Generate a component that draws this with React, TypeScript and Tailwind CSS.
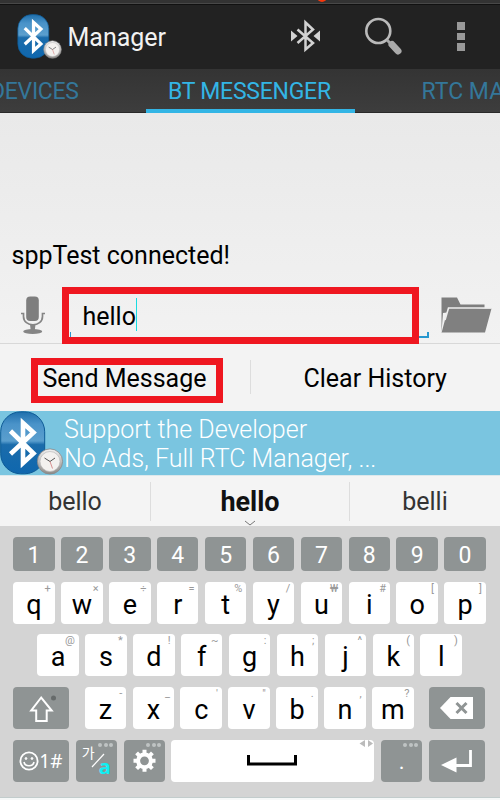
import React from 'react';

function BluetoothClock({ className }: { className: string }) {
  return (
    <svg viewBox="0 0 64 64" className={className}>
      <defs>
        <linearGradient id="pill" x1="0" y1="0" x2="0" y2="1">
          <stop offset="0" stopColor="#1f6fac" />
          <stop offset="0.2" stopColor="#4a93c9" />
          <stop offset="0.47" stopColor="#5b9fce" />
          <stop offset="0.53" stopColor="#1b6cab" />
          <stop offset="1" stopColor="#0f67ae" />
        </linearGradient>
        <linearGradient id="rim" x1="0" y1="0" x2="0" y2="1">
          <stop offset="0" stopColor="#f2f2f2" />
          <stop offset="1" stopColor="#8d8a88" />
        </linearGradient>
      </defs>
      <rect x="1.2" y="0.8" width="44" height="62" rx="20" fill="url(#pill)" stroke="#0d5a96" strokeWidth="1" />
      <path d="M11 20 34 42.500 23.500 52V12L34 21.500 11 43" fill="none" stroke="#fff" strokeWidth="4.600" />
      <circle cx="50.500" cy="50.500" r="12.600" fill="url(#rim)" stroke="#888" strokeWidth="0.8" />
      <circle cx="50.500" cy="50.500" r="10" fill="#f3f1ef" stroke="#bbb" strokeWidth="0.7" />
      <path d="M45 47l5.500 3.500 5-3.500" fill="none" stroke="#555" strokeWidth="1" />
      <path d="M50.500 50.500l2.500 7" stroke="#c66" strokeWidth="0.7" />
    </svg>
  );
}

function Header() {
  return (
    <>
      <div className="flex h-[3px] justify-center overflow-hidden bg-[#333] pl-[144px]">
        <div className="-mt-[8px] size-[10px] rounded-full bg-[#f8370c]" />
      </div>
      <header className="flex h-[66px] items-start border-t border-[#484848] bg-[#222] shadow-[inset_0_1px_0_#111]">
        <BluetoothClock className="ml-[17px] mt-[10px] h-[45px] w-[45px]" />
        <h1 className="ml-[5.5px] mt-[18px] w-[220.5px] text-[25px] leading-[32px] text-[#f2f2f2]">Manager</h1>
        <svg className="mt-[14px] h-[36px] w-[34px]" viewBox="288 18 34 36" fill="none">
          <path d="M297.500 29.500 313 43l-7.500 6.500v-27l7.500 7L297.500 43" stroke="#d2d2d2" strokeWidth="2.500" />
          <path d="M291 30.500v11l6.500-5.500zM320 30.500v11l-6.500-5.500z" fill="#d2d2d2" />
        </svg>
        <svg className="ml-[40px] mt-[11px] h-[42px] w-[42px]" viewBox="362 15 42 42" fill="none">
          <circle cx="378.300" cy="31" r="12" stroke="#bababa" strokeWidth="2.600" />
          <path d="m387 40 4 4" stroke="#aaa" strokeWidth="3" />
          <path d="m392 44.500 6 6.500" stroke="#aaa" strokeWidth="7" strokeLinecap="round" />
        </svg>
        <div className="ml-[53px] mt-[18px] flex flex-col gap-[3px]">
          <i className="size-[7.5px] bg-[#999]" />
          <i className="size-[7.5px] bg-[#999]" />
          <i className="size-[7.5px] bg-[#999]" />
        </div>
      </header>
      <nav className="flex h-[44px] overflow-hidden whitespace-nowrap bg-linear-to-b from-[#343434] to-[#3d3d3d] text-[23px] leading-[45px] text-[#34779a] shadow-[inset_0_-1px_0_#292929]">
        <div className="w-[146px] shrink-0"><span className="-ml-[10px] tracking-[-0.3px]">DEVICES</span></div>
        <div className="h-[44px] w-[209px] shrink-0 border-b-4 border-[#33b5e5] pl-[22px] tracking-[-0.25px] text-[#33b5e5]">BT MESSENGER</div>
        <div className="ml-[66.5px]">RTC MANAGER</div>
      </nav>
    </>
  );
}

function Messenger() {
  return (
    <section className="flex h-[231px] flex-col border-b border-[#d8d8d8] bg-linear-to-b from-[#e9e9e9] to-[#f2f2f2]">
      <p className="ml-[11.5px] mt-[127px] h-[32px] text-[25px] leading-[32px]">sppTest connected!</p>
      <div className="mt-[15px] flex items-start">
        <svg className="ml-[20px] mt-[8px] h-[40px] w-[26px]" viewBox="20 295 26 40" fill="none" stroke="#858585">
          <rect x="26.200" y="296.500" width="12.600" height="24.500" rx="4" fill="#7e7e7e" stroke="none" />
          <path d="M21 313.500h2.500v3c0 11 19 11 19 0v-3H45" strokeWidth="1.700" />
          <path d="M30 324.500h5.500l-.7 5.500h-4.100z" fill="#858585" stroke="none" />
          <ellipse cx="32.700" cy="331.500" rx="9.500" ry="2.400" fill="#858585" stroke="none" />
        </svg>
        <div className="ml-[16px] flex h-[57px] w-[357px] items-start border-[7px] border-[#ef1720]">
          <i className="ml-px mt-[38px] h-[5px] w-px bg-[#2994cf]" />
          <span className="ml-[11.5px] mt-[7px] text-[25px] leading-[32px]">hello</span>
          <i className="mt-[4px] h-[33px] w-px bg-[#18dce1]" />
        </div>
        <i className="mt-[45px] h-[6px] w-[10px] border-b-2 border-r-2 border-[#2998cf]" />
        <svg className="ml-[12px] mt-[10px] h-[38px] w-[52px]" viewBox="441 297 52 38">
          <path d="M441.500 332.500v-35H457l3.500 7h24v3.500l-41.500 5z" fill="#7e7e7e" />
          <path d="M441.500 333 448 308.500h43.500l-6.500 24h-43z" fill="#808080" />
          <path d="m445 320 3.500-12h43" fill="none" stroke="#eee" strokeWidth="1.600" />
        </svg>
      </div>
    </section>
  );
}

function Actions() {
  return (
    <>
      <div className="flex h-[67px] items-start bg-[#f3f3f3] text-[25px] leading-[32px]">
        <div className="ml-[31px] mt-[14px] h-[45px] w-[192px] whitespace-nowrap border-[7px] border-[#ef1720] pl-[4.5px] leading-[28px]">Send Message</div>
        <i className="ml-[27px] mt-[16px] h-[34px] w-px bg-[#ddd]" />
        <div className="ml-[52.5px] mt-[19px] whitespace-nowrap">Clear History</div>
      </div>
      <aside className="flex h-[64px] items-start bg-[#7ac5e0] text-[25px] font-light text-white">
        <BluetoothClock className="-ml-px mt-0 h-[64px] w-[65px]" />
        <div className="pt-[4px] leading-[29px]">
          <p>Support the Developer</p>
          <p>No Ads, Full RTC Manager, ...</p>
        </div>
      </aside>
      <div className="flex h-[51px] items-center border-t border-[#dce8ec] bg-[#f4f4f4] text-center text-[25px] text-[#333]">
        <span className="w-[150px] pt-[2px]">bello</span>
        <span className="flex h-[39px] w-[200px] flex-col items-center border-x border-[#ddd] text-[27px] font-bold text-[#111]">
          <span className="h-[38px] leading-[40px]">hello</span>
          <svg className="h-[6px] w-[12px] shrink-0" viewBox="0 0 12 6"><path d="m1 1 5 4 5-4" fill="none" stroke="#777" /></svg>
        </span>
        <span className="w-[150px] pt-[2px]">belli</span>
      </div>
    </>
  );
}

function Key({ label, hint }: { label: string; hint: string }) {
  return (
    <div className="relative h-[42px] w-[41.5px] rounded-[4px] bg-white text-center text-[27px] leading-[47px] text-black">
      {label}
      <span className="absolute right-[4px] top-0 text-[11px] leading-[13px] text-[#999]">{hint}</span>
    </div>
  );
}

function Dots() {
  return (
    <span className="absolute right-[4px] top-[3px] flex gap-[1.5px]">
      <i className="size-[4px] rounded-full bg-[#bfc3c3]" />
      <i className="size-[4px] rounded-full bg-[#bfc3c3]" />
      <i className="size-[4px] rounded-full bg-[#bfc3c3]" />
    </span>
  );
}

const top = [['q', '+'], ['w', '×'], ['e', '÷'], ['r', '='], ['t', '%'], ['y', '/'], ['u', '₩'], ['i', '#'], ['o', '['], ['p', ']']];
const middle = [['a', '@'], ['s', '*'], ['d', '!'], ['f', '~'], ['g', ':'], ['h', ';'], ['j', '^'], ['k', '('], ['l', ')']];
const bottom = [['z', '-'], ['x', '_'], ['c', "'"], ['v', '"'], ['b', '.'], ['n', ','], ['m', '?']];

function Keyboard() {
  return (
    <section className="flex h-[271px] flex-col bg-[#d4d4d4] pl-[13.3px] pt-[11px] font-[Roboto,'Noto_Sans_CJK_KR',sans-serif]">
      <div className="flex gap-[6.4px]">
        {'1234567890'.split('').map((n) => (
          <div key={n} className="h-[34px] w-[41.5px] rounded-[4px] bg-[#8f9494] text-center text-[23px] leading-[38px] text-white">{n}</div>
        ))}
      </div>
      <div className="mt-[11px] flex gap-[6.4px]">{top.map(([a, b]) => <Key key={a} label={a} hint={b} />)}</div>
      <div className="ml-[24px] mt-[10px] flex gap-[6.4px]">{middle.map(([a, b]) => <Key key={a} label={a} hint={b} />)}</div>
      <div className="mt-[11px] flex gap-[6.4px]">
        <div className="mr-[9px] h-[42px] w-[56px] rounded-[4px] bg-[#8f9494]">
          <svg viewBox="13 687 56 42" fill="none"><path d="m41.200 697.500-10 13h5v10.500h10.500v-10.500h5z" stroke="#fff" strokeWidth="2" /><circle cx="53.500" cy="698" r="2.500" fill="#666b6b" /></svg>
        </div>
        {bottom.map(([a, b]) => <Key key={a} label={a} hint={b} />)}
        <div className="ml-[9px] h-[42px] w-[56px] rounded-[4px] bg-[#8f9494]">
          <svg viewBox="430 687 56 42"><path d="m441 708 10.500-11H474v22h-22.500z" fill="#fff" /><path d="m457.500 703 10 10m0-10-10 10" stroke="#8f9494" strokeWidth="3" /></svg>
        </div>
      </div>
      <div className="mt-[11px] flex gap-[6.4px] text-white">
        <div className="flex h-[42px] w-[56px] items-center rounded-[4px] bg-[#8f9494] pl-[6px]">
          <svg className="size-[20px]" viewBox="0 0 20 20" fill="none" stroke="#fff"><circle cx="10" cy="10" r="8.600" strokeWidth="1.800" /><circle cx="7" cy="7.500" r=".9" fill="#fff" /><circle cx="13" cy="7.500" r=".9" fill="#fff" /><path d="M5 11c1 5 9 5 10 0" strokeWidth="1.600" /></svg>
          <span className="font-['Noto_Sans',sans-serif] text-[19px] leading-[42px]">1#</span>
        </div>
        <div className="relative h-[42px] w-[41.5px] rounded-[4px] bg-[#8f9494]">
          <Dots />
          <span className="absolute left-[6px] top-[5px] text-[14px] leading-[16px]">가</span>
          <svg className="absolute left-0 top-0 h-[42px] w-[42px]" viewBox="0 0 42 42"><path d="M16 27 28 14" stroke="#fff" strokeWidth="1.200" /></svg>
          <span className="absolute left-[23px] top-[16px] font-['Noto_Sans',sans-serif] text-[20px] font-bold leading-[22px] text-[#0ff0f4]">a</span>
        </div>
        <div className="relative h-[42px] w-[41.5px] rounded-[4px] bg-[#8f9494]">
          <Dots />
          <svg className="h-[42px] w-[41px]" viewBox="-20.500 -20.800 41 42" fill="none" stroke="#fff">
            <circle r="6.400" strokeWidth="4" />
            <path d="M0-7v-4M0 7v4M-7 0h-4M7 0h4M-5-5l-2.900-2.900M5-5l2.900-2.900M-5 5l-2.900 2.900M5 5l2.900 2.900" strokeWidth="4" />
          </svg>
        </div>
        <div className="h-[42px] w-[203px] rounded-[4px] bg-white">
          <svg viewBox="172 740 203 42"><path d="M249.500 755v9h47v-9" fill="none" stroke="#000" strokeWidth="3" /><path d="m360.500 743.500 5.500-3.500v7zM374 743.500l-5-3.500v7z" fill="#bbb" /></svg>
        </div>
        <div className="relative h-[42px] w-[41.500px] rounded-[4px] bg-[#8f9494]"><Dots /><span className="block text-center text-[22px] leading-[44px]">.</span></div>
        <div className="h-[42px] w-[56px] rounded-[4px] bg-[#8f9494]">
          <svg viewBox="430 740 56 42"><path d="M471.500 750v15.500H454" fill="none" stroke="#fff" strokeWidth="2.800" /><path d="m442 765 15.500-7.500v15z" fill="#fff" /></svg>
        </div>
      </div>
    </section>
  );
}

export default function App() {
  return (
    <main className="h-[800px] w-[500px] overflow-hidden bg-[#f6f8f8] font-[Roboto,sans-serif] text-black">
      <Header />
      <Messenger />
      <Actions />
      <Keyboard />
      <div className="h-px bg-[#c2cccc]" />
    </main>
  );
}
